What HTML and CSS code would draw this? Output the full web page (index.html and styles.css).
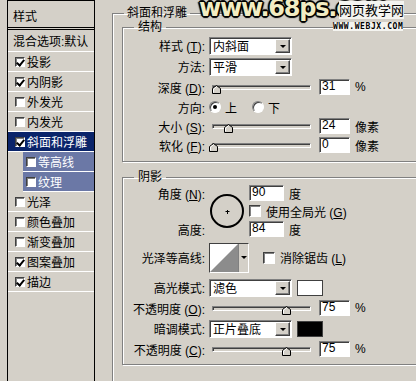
FILE: index.html
```html
<!DOCTYPE html>
<html lang="zh-CN">
<head>
    <meta charset="UTF-8">
    <title>图层样式 - 斜面和浮雕</title>
    <link rel="stylesheet" href="styles.css">
</head>
<body>

    <div class="dialog">
        <!-- styles list -->
        <div class="styles-list">
            <div class="list-head">样式</div>
            <div class="list-item blend">混合选项:默认</div>
            <div class="list-item"><span class="check on"></span>投影</div>
            <div class="list-item"><span class="check on"></span>内阴影</div>
            <div class="list-item"><span class="check"></span>外发光</div>
            <div class="list-item"><span class="check"></span>内发光</div>
            <div class="list-item selected"><span class="check on"></span>斜面和浮雕</div>
            <div class="list-item sub"><span class="check"></span>等高线</div>
            <div class="list-item sub"><span class="check"></span>纹理</div>
            <div class="list-item"><span class="check"></span>光泽</div>
            <div class="list-item"><span class="check"></span>颜色叠加</div>
            <div class="list-item"><span class="check"></span>渐变叠加</div>
            <div class="list-item"><span class="check on"></span>图案叠加</div>
            <div class="list-item"><span class="check on"></span>描边</div>
        </div>

        <!-- settings -->
        <div class="settings">
            <fieldset class="group outer">
                <legend>斜面和浮雕</legend>

                <fieldset class="group inner">
                    <legend>结构</legend>
                    <div class="row sel">
                        <label>样式 (<u>T</u>):</label>
                        <div class="select"><span>内斜面</span><i class="drop"></i></div>
                    </div>
                    <div class="row sel">
                        <label>方法:</label>
                        <div class="select"><span>平滑</span><i class="drop"></i></div>
                    </div>
                    <div class="row">
                        <label>深度 (<u>D</u>):</label>
                        <div class="slider"><svg class="thumb" style="left: calc(3% - 4px)" width="9" height="9" viewBox="0 0 9 9"><path d="M0.5 8.5V3.5L4.5 0.5L8.5 3.5V8.5Z" fill="#d4d0c8" stroke="#000"/><path d="M1.5 7.5V4L4.5 1.8" fill="none" stroke="#fff"/></svg></div>
                        <span class="field">31</span><span class="unit">%</span>
                    </div>
                    <div class="row">
                        <label>方向:</label>
                        <span class="radio on"></span><span class="radio-text">上</span>
                        <span class="radio second"></span><span class="radio-text">下</span>
                    </div>
                    <div class="row short">
                        <label>大小 (<u>S</u>):</label>
                        <div class="slider"><svg class="thumb" style="left: calc(15% - 4px)" width="9" height="9" viewBox="0 0 9 9"><path d="M0.5 8.5V3.5L4.5 0.5L8.5 3.5V8.5Z" fill="#d4d0c8" stroke="#000"/><path d="M1.5 7.5V4L4.5 1.8" fill="none" stroke="#fff"/></svg></div>
                        <span class="field">24</span><span class="unit">像素</span>
                    </div>
                    <div class="row">
                        <label>软化 (<u>F</u>):</label>
                        <div class="slider"><svg class="thumb" style="left: calc(0% - 4px)" width="9" height="9" viewBox="0 0 9 9"><path d="M0.5 8.5V3.5L4.5 0.5L8.5 3.5V8.5Z" fill="#d4d0c8" stroke="#000"/><path d="M1.5 7.5V4L4.5 1.8" fill="none" stroke="#fff"/></svg></div>
                        <span class="field">0</span><span class="unit">像素</span>
                    </div>
                </fieldset>

                <fieldset class="group inner shadow">
                    <legend>阴影</legend>
                    <div class="angle">
                        <label class="angle-label">角度 (<u>N</u>):</label>
                        <svg class="dial" width="36" height="36" viewBox="0 0 36 36">
                            <circle cx="18" cy="18" r="16" fill="none" stroke="#000" stroke-width="2"/>
                            <path d="M16.5 18.5h4M18.5 17v4" stroke="#000" stroke-width="1"/>
                        </svg>
                        <div class="angle-line"><span class="field wide">90</span><span class="unit">度</span></div>
                        <div class="angle-line"><span class="check big"></span><span class="check-text">使用全局光 (<u>G</u>)</span></div>
                        <label class="height-label">高度:</label>
                        <div class="angle-line"><span class="field wide">84</span><span class="unit">度</span></div>
                    </div>
                    <div class="row contour-row">
                        <label>光泽等高线:</label>
                        <div class="contour">
                            <svg width="28" height="28" viewBox="0 0 28 28"><rect width="28" height="28" fill="#fff"/><path d="M0 28L28 0V28Z" fill="#8c8c8c"/></svg>
                            <i class="contour-drop"></i>
                        </div>
                        <span class="check big antialias"></span><span class="check-text">消除锯齿 (<u>L</u>)</span>
                    </div>
                    <div class="row sel">
                        <label>高光模式:</label>
                        <div class="select"><span>滤色</span><i class="drop"></i></div>
                        <span class="swatch white"></span>
                    </div>
                    <div class="row">
                        <label>不透明度 (<u>O</u>):</label>
                        <div class="slider"><svg class="thumb" style="left: calc(75% - 4px)" width="9" height="9" viewBox="0 0 9 9"><path d="M0.5 8.5V3.5L4.5 0.5L8.5 3.5V8.5Z" fill="#d4d0c8" stroke="#000"/><path d="M1.5 7.5V4L4.5 1.8" fill="none" stroke="#fff"/></svg></div>
                        <span class="field">75</span><span class="unit">%</span>
                    </div>
                    <div class="row sel">
                        <label>暗调模式:</label>
                        <div class="select"><span>正片叠底</span><i class="drop"></i></div>
                        <span class="swatch black"></span>
                    </div>
                    <div class="row">
                        <label>不透明度 (<u>C</u>):</label>
                        <div class="slider"><svg class="thumb" style="left: calc(75% - 4px)" width="9" height="9" viewBox="0 0 9 9"><path d="M0.5 8.5V3.5L4.5 0.5L8.5 3.5V8.5Z" fill="#d4d0c8" stroke="#000"/><path d="M1.5 7.5V4L4.5 1.8" fill="none" stroke="#fff"/></svg></div>
                        <span class="field">75</span><span class="unit">%</span>
                    </div>
                </fieldset>
            </fieldset>
        </div>
    </div>

    <!-- watermarks -->
    <div class="watermark">www.68ps.com</div>
    <div class="site-mark">
        <span class="site-name">网页教学网</span>
        <span class="site-url">WWW.WEBJX.COM</span>
    </div>

</body>
</html>
```

FILE: styles.css
```css
/* General Styles */
* {
    box-sizing: border-box;
}

body {
    margin: 0;
    width: 416px;
    height: 381px;
    overflow: hidden;
    position: relative;
    background-color: #d4d0c8;
    font-family: "Liberation Sans", "Noto Sans CJK SC", sans-serif;
    font-size: 12px;
    color: #000;
}

u {
    text-decoration: underline;
}

.dialog {
    display: flex;
    padding-left: 7px;
    height: 100%;
}

/* Styles list */
.styles-list {
    width: 88px;
    flex: none;
    height: 400px;
    border: 1px solid #000;
    border-bottom: none;
}

.list-head {
    height: 29px;
    padding: 6px 0 0 5px;
    line-height: 20px;
    border-bottom: 3px double #000;
}

.list-item {
    display: flex;
    align-items: center;
    gap: 2px;
    height: 20px;
    padding-left: 7px;
    border-bottom: 1px solid #fff;
}

.list-item.blend {
    height: 22px;
    padding-left: 5px;
}

.list-item.selected {
    background-color: #0a246a;
    color: #fff;
}

.list-item.sub {
    margin-left: 15px;
    padding-left: 3px;
    background-color: #6b78a6;
    color: #fff;
}

.check {
    position: relative;
    display: inline-block;
    width: 10px;
    height: 10px;
    flex: none;
    background: #fff;
    border: 1px solid;
    border-color: #404040 #fff #fff #404040;
    box-shadow: 1px 1px 0 #808080 inset;
}

.check.on::after {
    content: "";
    position: absolute;
    left: 2px;
    top: 0;
    width: 3px;
    height: 6px;
    border: solid #000;
    border-width: 0 2px 2px 0;
    transform: rotate(40deg);
}

.check.big {
    width: 12px;
    height: 12px;
}

/* Group boxes */
fieldset.group {
    margin: 0;
    padding: 0;
    min-width: 0;
    border: 1px solid #808080;
    box-shadow: 1px 1px 0 #fff inset, 1px 1px 0 #fff;
}

fieldset.group legend {
    padding: 0 4px;
    margin-left: 11px;
    line-height: 14px;
}

.group.outer {
    margin: 6px 0 0 17px;
    width: 340px;
    padding: 0 0 40px 9px;
}

.group.outer > legend {
    margin-left: 2px;
    padding: 0 3px;
}

.group.inner {
    padding: 1px 0 6px 0;
}

.group.shadow {
    margin-top: 8px;
    padding: 0 0 5px 0;
}

/* Rows */
.row {
    display: flex;
    align-items: center;
    height: 20px;
}

.row.sel {
    height: 21px;
}

.row.short {
    height: 18px;
}

.row label,
.angle label {
    width: 82px;
    margin-right: 4px;
    text-align: right;
    white-space: nowrap;
}

.select {
    display: flex;
    align-items: center;
    width: 83px;
    height: 18px;
    padding-left: 2px;
    background: #fff;
    border: 1px solid;
    border-color: #808080 #fff #fff #808080;
    box-shadow: 1px 1px 0 #404040 inset;
}

.select span {
    flex: 1;
    padding-left: 1px;
}

.drop {
    position: relative;
    width: 15px;
    height: 14px;
    margin-right: 1px;
    background: #d4d0c8;
    border: 1px solid;
    border-color: #fff #404040 #404040 #fff;
    box-shadow: -1px -1px 0 #808080 inset;
}

.drop::after,
.contour-drop::after {
    content: "";
    position: absolute;
    left: 4px;
    top: 5px;
    border-left: 3px solid transparent;
    border-right: 3px solid transparent;
    border-top: 3px solid #000;
}

.slider {
    position: relative;
    width: 99px;
    height: 5px;
    margin: 0 8px 0 3px;
    background: #d4d0c8;
    border: 1px solid;
    border-color: #808080 #fff #fff #808080;
    box-shadow: 1px 1px 0 #404040 inset;
}

.thumb {
    position: absolute;
    top: -1px;
}

.field {
    display: inline-block;
    width: 31px;
    height: 16px;
    padding-left: 2px;
    line-height: 13px;
    background: #fff;
    border: 1px solid;
    border-color: #808080 #fff #fff #808080;
    box-shadow: 1px 1px 0 #404040 inset;
}

.field.wide {
    width: 35px;
}

.unit {
    margin-left: 5px;
}

.radio {
    position: relative;
    width: 12px;
    height: 12px;
    border-radius: 50%;
    background: #fff;
    border: 1px solid;
    border-color: #808080 #fff #fff #808080;
    box-shadow: 1px 1px 0 #404040 inset;
}

.radio.on::after {
    content: "";
    position: absolute;
    left: 3px;
    top: 3px;
    width: 4px;
    height: 4px;
    border-radius: 50%;
    background: #000;
}

.radio.second {
    margin-left: 15px;
}

.radio-text {
    margin-left: 4px;
}

/* Angle block */
.angle {
    display: grid;
    grid-template-columns: 82px 36px auto;
    grid-template-rows: 18px 18px 18px;
    column-gap: 4px;
    align-items: center;
}

.angle label {
    margin-right: 0;
}

.dial {
    grid-column: 2;
    grid-row: 1 / 4;
}

.angle-line {
    display: flex;
    align-items: center;
    grid-column: 3;
}

.height-label {
    grid-column: 1;
    grid-row: 3;
}

.check-text {
    margin-left: 5px;
}

.contour-row {
    height: 39px;
}

.contour {
    display: flex;
    width: 40px;
    height: 30px;
    border: 1px solid;
    border-color: #404040 #fff #fff #404040;
}

.contour svg {
    display: block;
}

.contour-drop {
    position: relative;
    flex: 1;
    background: #d4d0c8;
    border-left: 1px solid #808080;
}

.contour-drop::after {
    left: 2px;
    top: 12px;
}

.antialias {
    margin-left: 14px;
}

.swatch {
    width: 26px;
    height: 16px;
    margin-left: 5px;
    border: 1px solid #404040;
}

.swatch.white {
    background: #fff;
}

.swatch.black {
    background: #000;
}

/* Watermarks */
.watermark {
    position: absolute;
    left: 199px;
    top: -6px;
    font-family: "DejaVu Sans", sans-serif;
    font-size: 24px;
    font-weight: bold;
    letter-spacing: -1.2px;
    color: #f2ecc2;
    text-shadow: 1px 1px 0 #000, -1px -1px 0 #000, 1px -1px 0 #000, -1px 1px 0 #000,
        2px 0 1px #000, -2px 0 1px #000, 0 2px 1px #000, 0 -2px 1px #000;
}

.site-mark {
    position: absolute;
    left: 333px;
    top: 1px;
    display: flex;
    flex-direction: column;
    align-items: flex-start;
}

.site-name {
    margin-left: 6px;
    font-family: "Noto Sans CJK SC", sans-serif;
    font-size: 13px;
    line-height: 18px;
    background: #f4f4f0;
}

.site-url {
    margin-top: 3px;
    font-family: "DejaVu Sans Mono", monospace;
    font-size: 8px;
    font-weight: bold;
    letter-spacing: 0.6px;
    line-height: 9px;
    background: #f4f4f0;
}
```
